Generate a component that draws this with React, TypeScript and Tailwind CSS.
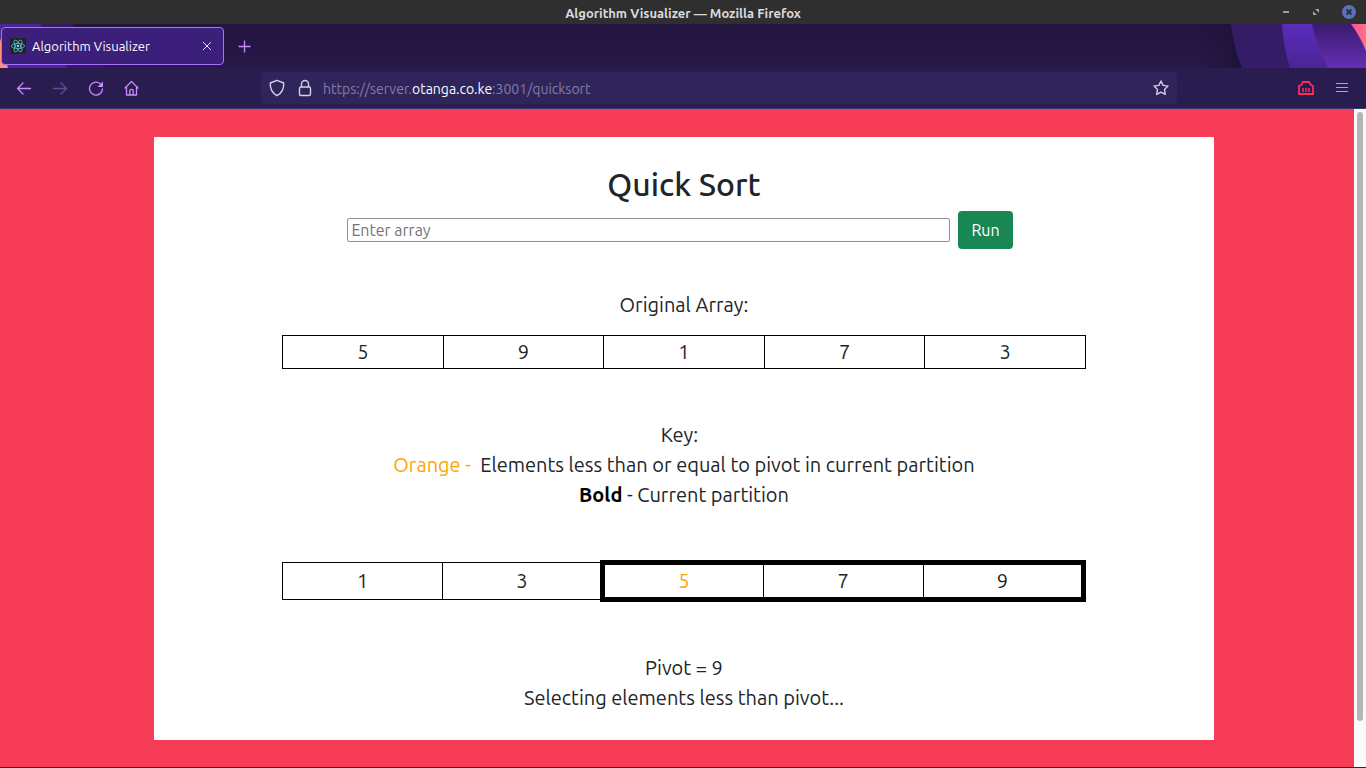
import React from 'react';

type Cell = { value: number; active?: boolean; less?: boolean };

const original = [5, 9, 1, 7, 3];

const partition: Cell[] = [
  { value: 1 },
  { value: 3 },
  { value: 5, active: true, less: true },
  { value: 7, active: true },
  { value: 9, active: true },
];

// left / right edges of the current partition get the thick border too
function cellClass(cells: Cell[], i: number) {
  const { active, less } = cells[i];
  let cls = 'border border-black py-px text-center';
  if (active) {
    cls += ' border-y-[5px]';
    if (!cells[i - 1]?.active) cls += ' border-l-[5px]';
    if (!cells[i + 1]?.active) cls += ' border-r-[5px]';
  }
  if (less) cls += ' text-[#ffa500]';
  return cls;
}

function TitleBar() {
  return (
    <div className="relative flex h-6 items-center justify-center bg-[#2f2f2f] pt-1 text-[13px] font-semibold text-[#dadada]">
      Algorithm Visualizer — Mozilla Firefox
      <div className="absolute inset-y-0 right-2.5 flex items-center gap-[23px]">
        <button aria-label="Minimize">
          <svg width="7" height="14" viewBox="0 0 7 14"><path d="M0 7h6" stroke="#a0a0a0" strokeWidth="2" /></svg>
        </button>
        <button aria-label="Restore">
          <svg width="6" height="6" viewBox="0 0 6 6" fill="#a0a0a0"><path d="M2 0h4v4zM0 2v4h4z" /></svg>
        </button>
        <button aria-label="Close">
          <svg width="14" height="14" viewBox="0 0 14 14">
            <circle cx="7" cy="7" r="7" fill="#5b70b8" />
            <path d="M4.5 4.5l5 5M9.5 4.5l-5 5" stroke="#2b2f3d" strokeWidth="2" />
          </svg>
        </button>
      </div>
    </div>
  );
}

function ReactLogo() {
  return (
    <svg width="16" height="16" viewBox="0 0 16 16" fill="none" stroke="#53c1de" strokeWidth="0.8">
      <rect width="16" height="16" rx="2" fill="#222" stroke="none" />
      <ellipse cx="8" cy="8" rx="6.6" ry="2.6" />
      <ellipse cx="8" cy="8" rx="6.6" ry="2.6" transform="rotate(60 8 8)" />
      <ellipse cx="8" cy="8" rx="6.6" ry="2.6" transform="rotate(120 8 8)" />
      <circle cx="8" cy="8" r="1.3" fill="#61dafb" stroke="none" />
    </svg>
  );
}

function TabStrip() {
  return (
    <div className="relative flex h-11 items-start bg-gradient-to-b from-[#23133f] to-[#271a48] pt-[3px]">
      <svg className="absolute left-0 top-0" width="110" height="44" viewBox="0 0 110 44">
        <path d="M0 0h72l34 44H0z" fill="#341a66" />
        <path d="M0 0h40l28 44H0z" fill="#4a2596" />
        <path d="M0 14l8 30H0z" fill="#ff8f76" />
      </svg>
      <svg className="absolute right-0 top-0" width="166" height="44" viewBox="0 0 166 44">
        <defs>
          <linearGradient id="shade"><stop stopColor="#1e1238" stopOpacity="0" /><stop offset="1" stopColor="#1e1238" /></linearGradient>
          <linearGradient id="mid" x2="0" y2="1"><stop stopColor="#5a2cbb" /><stop offset="1" stopColor="#4a2596" /></linearGradient>
          <linearGradient id="far" x2="0" y2="1"><stop stopColor="#3a1b6d" /><stop offset="1" stopColor="#652fb5" /></linearGradient>
          <linearGradient id="pink"><stop stopColor="#ff4fa0" /><stop offset="1" stopColor="#ff7284" /></linearGradient>
        </defs>
        <path d="M0 0h31l11 44H0z" fill="url(#shade)" />
        <path d="M31 0Q34 25 42 44H166V0z" fill="#351c67" />
        <path d="M82 0Q83 22 90 44H166V0z" fill="url(#mid)" />
        <path d="M112 0Q117 21 128 44H166V0z" fill="url(#far)" />
        <path d="M151 0Q160 12 166 27V0z" fill="url(#pink)" />
      </svg>
      <div className="relative ml-px flex h-[38px] w-[223px] items-center rounded border border-[#ac70ff] bg-[#3c1f7b] pl-2 pr-2.5 text-[#fbfbfe]">
        <ReactLogo />
        <span className="ml-1.5 flex-1 pt-0.5 text-[13px]">Algorithm Visualizer</span>
        <button aria-label="Close tab">
          <svg width="12" height="12" viewBox="0 0 12 12" stroke="#e4dcf5"><path d="M2 2l8 8M10 2l-8 8" /></svg>
        </button>
      </div>
      <button aria-label="New tab" className="relative ml-3.5 flex h-[38px] items-center">
        <svg width="13" height="13" viewBox="0 0 13 13" stroke="#c68cff" strokeWidth="1.3"><path d="M6.500.5v12M.5 6.500h12" /></svg>
      </button>
    </div>
  );
}

function Toolbar() {
  return (
    <div className="flex h-[41px] items-center border-b border-[#3b3370] bg-[#291d4f] px-4 text-[#c68cff]">
      <div className="flex w-[245px] shrink-0 items-center gap-5">
        <button aria-label="Back">
          <svg width="16" height="16" viewBox="0 0 16 16" fill="none" stroke="currentColor" strokeWidth="1.3" strokeLinecap="round" strokeLinejoin="round"><path d="M14.500 8.500H1.500M7 3L1.500 8.500 7 14" /></svg>
        </button>
        <button aria-label="Forward" className="opacity-40">
          <svg width="16" height="16" viewBox="0 0 16 16" fill="none" stroke="currentColor" strokeWidth="1.3" strokeLinecap="round" strokeLinejoin="round"><path d="M1.500 8.500h13M9 3l5.500 5.500L9 14" /></svg>
        </button>
        <button aria-label="Reload">
          <svg width="16" height="16" viewBox="0 0 16 16" fill="none" stroke="currentColor" strokeWidth="1.3" strokeLinecap="round"><path d="M12 3.500A6.500 6.500 0 1 0 14.500 9" /><path d="M15 1.500V7H9.500z" fill="currentColor" stroke="none" /></svg>
        </button>
        <button aria-label="Home">
          <svg width="16" height="16" viewBox="0 0 16 16" fill="none" stroke="currentColor" strokeWidth="1.3" strokeLinecap="round" strokeLinejoin="round"><path d="M1 8l6.500-6.500L14 8M2.500 7v8h10V7M5.800 15v-4a1.700 1.700 0 0 1 3.400 0v4" /></svg>
        </button>
      </div>
      <div className="flex h-8 min-w-0 flex-1 items-center rounded bg-[#2f255b] px-2 text-[#d5cfea]">
        <svg width="16" height="18" viewBox="0 0 16 18" fill="none" stroke="currentColor" strokeWidth="1.4" strokeLinejoin="round"><path d="M8 1.300L14.700 4c.3 5.500-1.700 10-6.700 12.700C3 14 1 9.500 1.300 4z" /></svg>
        <svg className="ml-3" width="16" height="18" viewBox="0 0 16 18" fill="none" stroke="currentColor" strokeWidth="1.4"><rect x="2.500" y="8" width="11" height="8.500" rx="1.500" /><path d="M4.500 8V5a3.500 3.500 0 0 1 7 0v3" /></svg>
        <span className="ml-2.5 flex-1 pt-0.5 text-[14px] text-[#857da4]">
          https://server.<span className="text-[#fbfbfe]">otanga.co.ke</span>:3001/quicksort
        </span>
        <button aria-label="Bookmark">
          <svg width="16" height="16" viewBox="0 0 16 16" fill="none" stroke="currentColor" strokeWidth="1.400" strokeLinejoin="round"><path d="M8 1l2.100 4.400 4.900.7-3.500 3.400.8 4.900L8 12.100l-4.300 2.300.8-4.900L1 6.100l4.900-.7z" /></svg>
        </button>
      </div>
      <div className="flex w-[173px] shrink-0 items-center justify-end gap-[22px]">
        <button aria-label="Extension">
          <svg width="16" height="14" viewBox="0 0 16 14" fill="none" stroke="#ff2a5f"><path d="M1 13V5l2-1 2-3h6l2 3 2 1v8z" strokeWidth="1.800" /><path d="M5 7v4M8 7v4M11 7v4" strokeWidth="1.500" /></svg>
        </button>
        <button aria-label="Menu" className="mr-0.5">
          <svg width="12" height="10" viewBox="0 0 12 10" stroke="currentColor"><path d="M0 .5h12M0 4.500h12M0 8.500h12" strokeWidth="1.200" /></svg>
        </button>
      </div>
    </div>
  );
}

export default function App() {
  return (
    <div className="flex h-screen flex-col border-b border-[#2b2b2b] font-['Ubuntu','Noto_Sans',sans-serif]">
      <TitleBar />
      <TabStrip />
      <Toolbar />
      <div className="flex min-h-0 flex-1">
        <main className="flex-1 overflow-hidden bg-[#f73c58] py-7 pl-3.5">
          <div className="mx-auto w-full max-w-[1060px] bg-white px-32 pb-[27px] pt-7 text-center text-[20px] leading-[30px] text-[#212529]">
            <h1 className="mb-2 text-[32px] font-medium leading-[38px]">Quick Sort</h1>
            <form className="flex items-center justify-center gap-2 text-[16px] leading-6" onSubmit={e => e.preventDefault()}>
              <input
                aria-label="Array"
                placeholder="Enter array"
                className="h-6 w-3/4 rounded-[2px] border border-[#8f8f9d] px-[3px] placeholder:text-[#757575]"
              />
              <button className="mr-2 h-[38px] rounded bg-[#198754] px-[13px] text-white">Run</button>
            </form>

            <p className="mb-[15px] mt-[41px]">Original Array:</p>
            <table className="w-full table-fixed border-collapse">
              <tbody>
                <tr>
                  {original.map(n => (
                    <td key={n} className="border border-black py-px">{n}</td>
                  ))}
                </tr>
              </tbody>
            </table>

            <div className="mb-[50px] mt-[51px]">
              <p>Key:&nbsp;&nbsp;</p>
              <p><span className="text-[#ffa500]">Orange -&nbsp;</span> Elements less than or equal to pivot in current partition</p>
              <p><b className="text-black">Bold</b> - Current partition</p>
            </div>
            <table className="w-full table-fixed border-collapse">
              <tbody>
                <tr>
                  {partition.map((cell, i) => (
                    <td key={cell.value} className={cellClass(partition, i)}>{cell.value}</td>
                  ))}
                </tr>
              </tbody>
            </table>

            <div className="mt-[51px]">
              <p>Pivot = 9</p>
              <p>Selecting elements less than pivot...</p>
            </div>
          </div>
        </main>
        <div className="w-3 bg-[#fbfbfb] px-[3px] pb-[46px] pt-[3px]">
          <div className="h-full rounded-full bg-[#b5b5b5]" />
        </div>
      </div>
    </div>
  );
}
